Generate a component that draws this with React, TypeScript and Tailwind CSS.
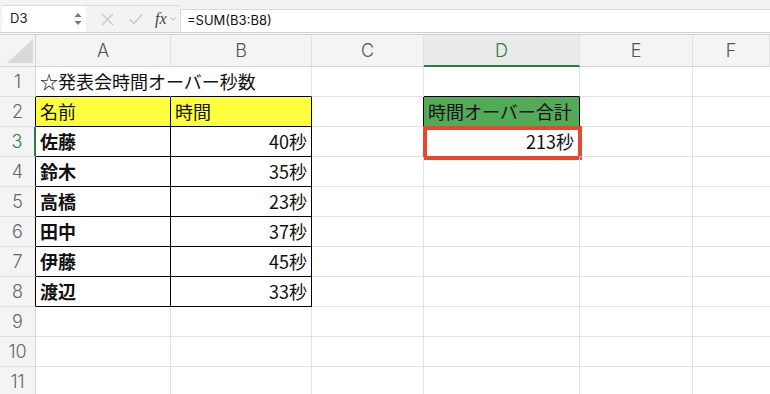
const jp = "font-['Hiragino_Sans','Noto_Sans_CJK_JP',sans-serif]";

const names = [
  { n: 3, name: "佐藤", sec: "40秒" },
  { n: 4, name: "鈴木", sec: "35秒" },
  { n: 5, name: "高橋", sec: "23秒" },
  { n: 6, name: "田中", sec: "37秒" },
  { n: 7, name: "伊藤", sec: "45秒" },
  { n: 8, name: "渡辺", sec: "33秒" },
];

const RowHead = ({ n, edge, active }: { n: number; edge?: string; active?: boolean }) => (
  <div
    className={`flex items-center justify-center bg-[#f4f4f4] border-b border-[#e0e0e0] font-['Inter',sans-serif] text-[18px] font-light ${
      active ? "text-[#2f7a45]" : "text-[#666]"
    } ${edge ?? "border-r border-r-[#d6d6d6]"}`}
  >
    {n}
  </div>
);

const Cell = ({ className = "", children }: { className?: string; children?: React.ReactNode }) => (
  <div className={`relative flex items-center px-1 border-r border-b border-[#e2e2e2] text-[18px] text-[#111] ${jp} ${className}`}>
    {children}
  </div>
);

export default function App() {
  return (
    <div className="w-[770px] h-[394px] overflow-hidden bg-white">
      {/* formula bar */}
      <div className="h-[32px] bg-[#f3f3f3] pt-[5px] flex">
        <div className="w-[84px] ml-[2px] bg-white border-t border-[#dadada] flex items-center justify-between pl-2 pr-1">
          <span className="font-['Inter',sans-serif] text-[13px] text-[#222]">D3</span>
          <svg width="8" height="14" viewBox="0 0 8 14">
            <path d="M4 1 L7.5 5 L0.5 5 Z" fill="#777" />
            <path d="M4 13 L7.5 9 L0.5 9 Z" fill="#777" />
          </svg>
        </div>
        <div className="w-[94px] flex items-center pl-[15px] gap-[15px] border-t border-[#dadada]">
          <svg width="13" height="13" viewBox="0 0 13 13">
            <path d="M1 1 L12 12 M12 1 L1 12" stroke="#c6c6c6" strokeWidth="1.4" />
          </svg>
          <svg width="14" height="12" viewBox="0 0 14 12">
            <path d="M1 6.5 L5 10.5 L13 1.5" stroke="#c6c6c6" strokeWidth="1.4" fill="none" />
          </svg>
          <div className="flex items-center gap-[3px] -ml-[3px]">
            <span className="font-['Liberation_Serif',serif] italic text-[16px] text-[#444]">fx</span>
            <svg width="6" height="4" viewBox="0 0 6 4">
              <path d="M0.5 0.5 L3 3 L5.5 0.5" stroke="#aaa" strokeWidth="0.9" fill="none" />
            </svg>
          </div>
        </div>
        <div className="flex-1 mt-[4px] bg-white border-t border-l border-[#dadada] flex items-center pl-[6px]">
          <span className="font-['Inter',sans-serif] text-[13px] text-[#111]">=SUM(B3:B8)</span>
        </div>
      </div>
      <div className="h-[3px] border-t border-b border-[#cfcfcf] bg-[#fafafa]" />

      {/* sheet */}
      <div className="grid grid-cols-[36px_135px_141px_112px_156px_113px_1fr] grid-rows-[32px] auto-rows-[30px]">
        {/* column headers */}
        <div className="bg-[#f4f4f4] border-r border-b border-[#d4d4d4] flex items-end justify-end pr-[2px] pb-[3px]">
          <svg width="26" height="24" viewBox="0 0 26 24">
            <path d="M26 0 L26 24 L0 24 Z" fill="#d9d9d9" />
          </svg>
        </div>
        {["A", "B", "C", "D", "E", "F"].map((c) => (
          <div
            key={c}
            className={`flex items-center justify-center font-['Inter',sans-serif] text-[18px] font-light border-r border-[#e0e0e0] ${
              c === "D"
                ? "bg-[#ebebeb] text-[#2f7a45] border-b-2 border-b-[#2f7a45]"
                : "bg-[#f4f4f4] text-[#555] border-b border-b-[#d4d4d4]"
            }`}
          >
            {c}
          </div>
        ))}

        {/* row 1 */}
        <RowHead n={1} />
        <Cell className="border-r-transparent border-b-black overflow-visible whitespace-nowrap z-10">
          ☆発表会時間オーバー秒数
        </Cell>
        <Cell className="border-b-black" />
        <Cell />
        <Cell className="border-b-black" />
        <Cell />
        <Cell className="border-r-0" />

        {/* row 2 */}
        <RowHead n={2} edge="border-r border-r-black" />
        <Cell className="bg-[#ffff3e] border-r-black border-b-black">名前</Cell>
        <Cell className="bg-[#ffff3e] border-r-black border-b-black">時間</Cell>
        <Cell className="border-r-black" />
        <Cell className="bg-[#53ab58] border-r-black border-b-black whitespace-nowrap">時間オーバー合計</Cell>
        <Cell />
        <Cell className="border-r-0" />

        {/* rows 3-8 */}
        {names.map((r) => (
          <div key={r.n} className="contents">
            <RowHead
              n={r.n}
              active={r.n === 3}
              edge={r.n === 3 ? "border-r-2 border-r-[#2f7a45]" : "border-r border-r-black"}
            />
            <Cell className="font-semibold border-r-black border-b-black">{r.name}</Cell>
            <Cell className="justify-end border-r-black border-b-black">{r.sec}</Cell>
            <Cell />
            {r.n === 3 ? (
              <Cell className="justify-end pr-[5px]">
                213秒
                <div className="absolute left-[-1px] top-[-1px] w-[159px] h-[34px] border-4 border-[#e9472d]" />
              </Cell>
            ) : (
              <Cell />
            )}
            <Cell />
            <Cell className="border-r-0" />
          </div>
        ))}

        {/* rows 9-11 */}
        {[9, 10, 11].map((n) => (
          <div key={n} className="contents">
            <RowHead n={n} />
            <Cell />
            <Cell />
            <Cell />
            <Cell />
            <Cell />
            <Cell className="border-r-0" />
          </div>
        ))}
      </div>
    </div>
  );
}
